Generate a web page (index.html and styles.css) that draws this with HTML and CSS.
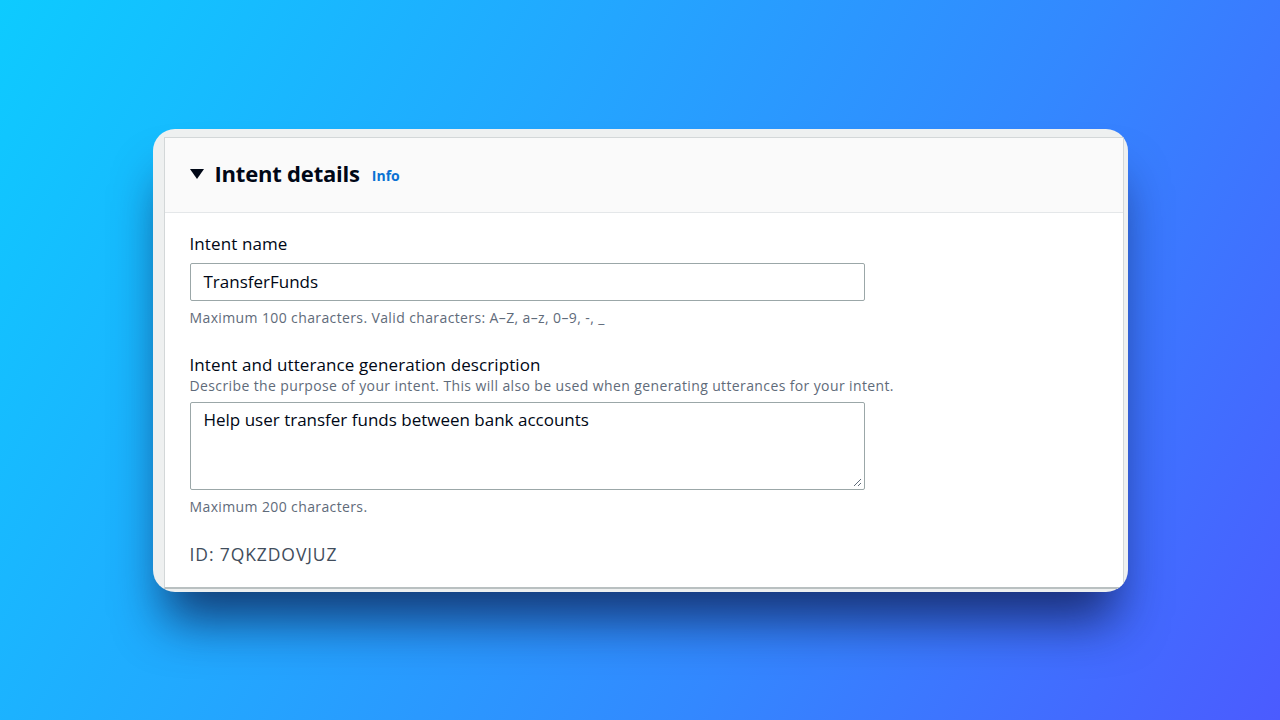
FILE: index.html
```html
<!DOCTYPE html>
<html lang="en">

<head>
    <meta charset="UTF-8">
    <meta name="viewport" content="width=device-width, initial-scale=1.0">
    <title>Intent details</title>
    <link rel="stylesheet" href="styles.css">
</head>

<body>
    <div class="stage">
        <div class="frame">
            <div class="panel">
                <!-- collapsible section header -->
                <div class="panel-head">
                    <svg class="caret" width="14" height="10" viewBox="0 0 14 10">
                        <path d="M0 0 H14 L7 10 Z" fill="#000716" />
                    </svg>
                    <h2>Intent details</h2>
                    <a class="info" href="#">Info</a>
                </div>
                <div class="panel-body">
                    <div class="field">
                        <label class="label">Intent name</label>
                        <div class="input">TransferFunds</div>
                        <p class="hint">Maximum 100 characters. Valid characters: A–Z, a–z, 0–9, -, _</p>
                    </div>
                    <div class="field">
                        <label class="label">Intent and utterance generation description</label>
                        <p class="desc">Describe the purpose of your intent. This will also be used when generating utterances for your intent.</p>
                        <div class="input textarea">Help user transfer funds between bank accounts
                            <svg class="grip" width="9" height="9" viewBox="0 0 9 9">
                                <path d="M8 1 L1 8 M8 5 L5 8" stroke="#5f6b7a" stroke-width="1" />
                            </svg>
                        </div>
                        <p class="hint">Maximum 200 characters.</p>
                    </div>
                    <p class="id">ID: 7QKZDOVJUZ</p>
                </div>
            </div>
        </div>
    </div>
</body>

</html>
```

FILE: styles.css
```css
* {
    margin: 0;
    padding: 0;
    box-sizing: border-box;
}

html,
body {
    height: 100%;
}

body {
    font-family: "Open Sans", "Noto Sans", sans-serif;
    color: #000716;
}

.stage {
    height: 100vh;
    display: flex;
    align-items: center;
    justify-content: center;
    background: linear-gradient(120deg, #0dcbff 0%, #22a8ff 35%, #3388ff 65%, #4b5bff 100%);
}

.frame {
    width: 975px;
    height: 463px;
    background: #eef0f0;
    border-radius: 22px;
    padding: 8px 4px 3px 11px;
    overflow: hidden;
    box-shadow: 0 40px 50px -12px rgba(14, 24, 72, 0.75);
}

.panel {
    height: 100%;
    background: #ffffff;
    border: 1px solid #d3d7d8;
    border-bottom: 2px solid #b9c0c1;
}

.panel-head {
    height: 75px;
    background: #fafafa;
    border-bottom: 1px solid #e4e7e9;
    display: flex;
    align-items: center;
    padding-left: 25px;
    padding-bottom: 3px;
}

.caret {
    margin-right: 11px;
    margin-top: 2px;
}

.panel-head h2 {
    font-size: 22px;
    font-weight: 700;
    letter-spacing: -0.2px;
}

.info {
    color: #0972d3;
    font-size: 14px;
    font-weight: 700;
    text-decoration: none;
    margin-left: 12px;
    margin-top: 4px;
}

.panel-body {
    padding: 20px 25px 0 25px;
}

.field {
    margin-bottom: 26px;
}

.label {
    display: block;
    font-size: 17px;
    line-height: 22px;
    letter-spacing: 0.1px;
}

.input {
    width: 675px;
    height: 38px;
    margin-top: 8px;
    border: 1px solid #9ba7a8;
    border-radius: 2px;
    padding: 0 13px;
    font-size: 17px;
    line-height: 36px;
}

.textarea {
    position: relative;
    height: 88px;
    margin-top: 6px;
    line-height: 34px;
}

.grip {
    position: absolute;
    right: 2px;
    bottom: 2px;
}

.hint,
.desc {
    font-size: 14px;
    line-height: 20px;
    color: #5f6b7a;
    letter-spacing: 0.38px;
}

.hint {
    margin-top: 7px;
}

.id {
    font-size: 17.5px;
    line-height: 22px;
    letter-spacing: 0.9px;
    color: #414d5c;
}
```
